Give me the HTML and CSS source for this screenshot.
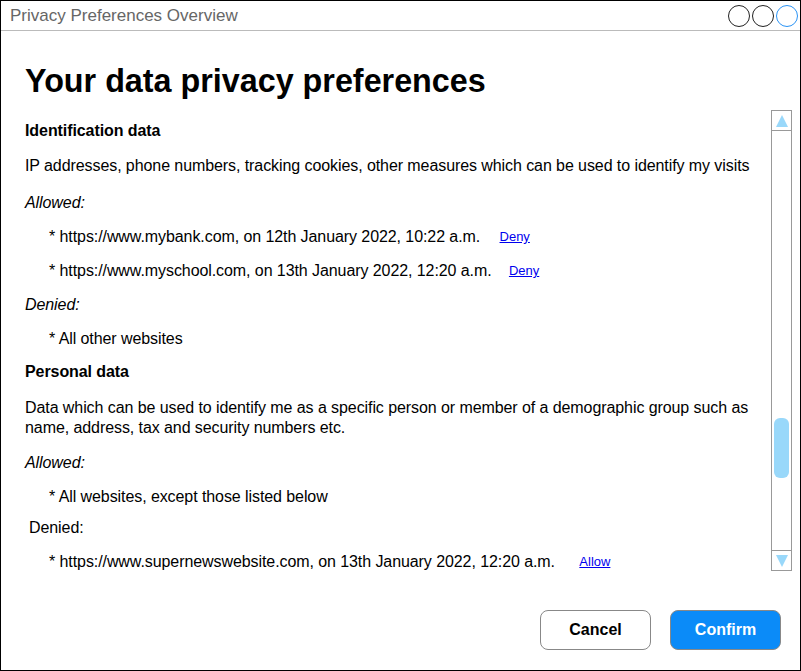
FILE: index.html
```html
<!DOCTYPE html>
<html lang="en">
<head>
  <meta charset="UTF-8">
  <meta name="viewport" content="width=device-width, initial-scale=1.0">
  <title>Privacy Preferences Overview</title>
  <link rel="stylesheet" href="styles.css">
</head>
<body>
  <div class="window">
    <div class="titlebar">
      <span class="title">Privacy Preferences Overview</span>
      <div class="controls">
        <span class="dot"></span>
        <span class="dot"></span>
        <span class="dot dot-active"></span>
      </div>
    </div>

    <div class="main">
      <h1>Your data privacy preferences</h1>

      <div class="scroll-area">
        <div class="content">
          <h2>Identification data</h2>
          <p class="desc">IP addresses, phone numbers, tracking cookies, other measures which can be used to identify my visits</p>
          <p class="label">Allowed:</p>
          <p class="item">* https://www.mybank.com, on 12th January 2022, 10:22 a.m. <a href="#">Deny</a></p>
          <p class="item">* https://www.myschool.com, on 13th January 2022, 12:20 a.m. <a href="#" class="link-tight">Deny</a></p>
          <p class="label">Denied:</p>
          <p class="item">* All other websites</p>

          <h2>Personal data</h2>
          <p class="desc desc-wrap">Data which can be used to identify me as a specific person or member of a demographic group such as name, address, tax and security numbers etc.</p>
          <p class="label">Allowed:</p>
          <p class="item">* All websites, except those listed below</p>
          <p class="label label-plain">Denied:</p>
          <p class="item">* https://www.supernewswebsite.com, on 13th January 2022, 12:20 a.m. <a href="#" class="link-wide">Allow</a></p>
        </div>

        <div class="scrollbar">
          <div class="scroll-btn"><span class="arrow-up"></span></div>
          <div class="track"><div class="thumb"></div></div>
          <div class="scroll-btn"><span class="arrow-down"></span></div>
        </div>
      </div>
    </div>

    <div class="actions">
      <button class="btn btn-secondary">Cancel</button>
      <button class="btn btn-primary">Confirm</button>
    </div>
  </div>
</body>
</html>
```

FILE: styles.css
```css
* {
  margin: 0;
  padding: 0;
  box-sizing: border-box;
}

body {
  font-family: "Liberation Sans", Arial, sans-serif;
  color: #000;
  background: #fff;
}

.window {
  width: 801px;
  height: 671px;
  border: 1px solid #000;
  display: flex;
  flex-direction: column;
}

/* Title bar */
.titlebar {
  height: 30px;
  border-bottom: 1px solid #bbb;
  display: flex;
  align-items: center;
  justify-content: space-between;
  padding: 0 2px 0 9px;
}

.title {
  font-size: 17px;
  color: #666;
}

.controls {
  display: flex;
  gap: 2px;
}

.dot {
  width: 22px;
  height: 22px;
  border: 1.5px solid #222;
  border-radius: 50%;
}

.dot-active {
  border-color: #2a93f5;
}

/* Main area */
.main {
  flex: 1;
  padding: 32px 8px 0 24px;
}

h1 {
  font-size: 32.3px;
  font-weight: bold;
  line-height: 37px;
  margin-bottom: 10px;
}

.scroll-area {
  display: flex;
  gap: 10px;
}

.content {
  flex: 1;
  padding-top: 11px;
  font-size: 16px;
  line-height: 20px;
  letter-spacing: -0.08px;
}

h2 {
  font-size: 16px;
  font-weight: bold;
  line-height: 20px;
  margin-bottom: 15px;
}

.content p {
  margin-bottom: 14px;
}

.content .item + h2 {
  margin-top: -1px;
}

.content .desc {
  margin-bottom: 17px;
}

.content .desc-wrap {
  margin-top: 16px;
  margin-bottom: 15px;
}

.label {
  font-style: italic;
}

.content .label-plain {
  font-style: normal;
  padding-left: 4px;
  margin-top: -3px;
}

.item {
  padding-left: 24px;
}

.item a {
  font-size: 13px;
  letter-spacing: 0;
  color: #0000ee;
  margin-left: 15px;
  vertical-align: 1px;
}

.item a.link-tight {
  margin-left: 13px;
}

.item a.link-wide {
  margin-left: 20px;
}

/* Scrollbar */
.scrollbar {
  width: 21px;
  height: 461px;
  border: 1px solid #999;
  display: flex;
  flex-direction: column;
}

.scroll-btn {
  height: 20px;
  display: flex;
  align-items: center;
  justify-content: center;
}

.scroll-btn:first-child {
  border-bottom: 1px solid #999;
}

.scroll-btn:last-child {
  border-top: 1px solid #999;
}

.arrow-up,
.arrow-down {
  width: 0;
  height: 0;
  border-left: 6px solid transparent;
  border-right: 6px solid transparent;
}

.arrow-up {
  border-bottom: 12px solid #99d8fa;
}

.arrow-down {
  border-top: 12px solid #99d8fa;
}

.track {
  flex: 1;
  padding: 287px 2px 0 2px;
}

.thumb {
  height: 60px;
  background: #99d8fa;
  border-radius: 6px;
}

/* Buttons */
.actions {
  display: flex;
  justify-content: flex-end;
  gap: 19px;
  padding: 0 19px 20px 0;
}

.btn {
  width: 111px;
  height: 40px;
  border-radius: 8px;
  border: 1px solid #888;
  font-family: "Liberation Sans", Arial, sans-serif;
  font-size: 16px;
  font-weight: bold;
  cursor: pointer;
}

.btn-secondary {
  background: #fff;
  color: #000;
}

.btn-primary {
  background: #0b8bf8;
  color: #fff;
}
```
